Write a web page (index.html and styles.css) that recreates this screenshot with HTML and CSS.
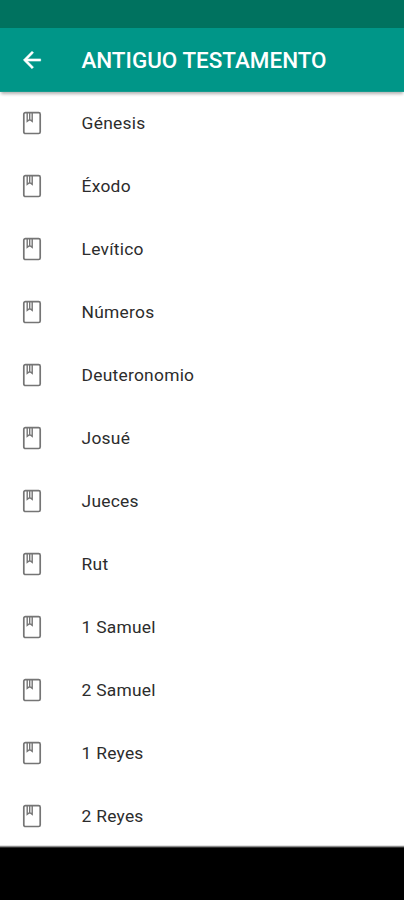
FILE: index.html
```html
<!DOCTYPE html>
<html lang="es">
<head>
<meta charset="utf-8">
<title>Antiguo Testamento</title>
<link rel="stylesheet" href="styles.css">
</head>
<body>
<svg width="0" height="0" class="defs" aria-hidden="true">
  <symbol id="book" viewBox="0 0 20 24">
    <rect x="1.8" y="1.7" width="16.4" height="20.8" rx="1.6" fill="none" stroke="currentColor" stroke-width="1.7"/>
    <path d="M5.2 2v8.4l2.5-2 2.5 2V2M7.7 2v6.4" fill="none" stroke="currentColor" stroke-width="1.4"/>
  </symbol>
</svg>
<div class="status"></div>
<header class="bar">
  <svg class="back" viewBox="0 0 24 24"><path d="M20 11H7.83l5.59-5.59L12 4l-8 8 8 8 1.41-1.41L7.83 13H20z" fill="currentColor" stroke="currentColor" stroke-width=".5"/></svg>
  <h1>ANTIGUO TESTAMENTO</h1>
</header>
<ul class="list">
  <li><svg><use href="#book"/></svg><span>Génesis</span></li>
  <li><svg><use href="#book"/></svg><span>Éxodo</span></li>
  <li><svg><use href="#book"/></svg><span>Levítico</span></li>
  <li><svg><use href="#book"/></svg><span>Números</span></li>
  <li><svg><use href="#book"/></svg><span>Deuteronomio</span></li>
  <li><svg><use href="#book"/></svg><span>Josué</span></li>
  <li><svg><use href="#book"/></svg><span>Jueces</span></li>
  <li><svg><use href="#book"/></svg><span>Rut</span></li>
  <li><svg><use href="#book"/></svg><span>1 Samuel</span></li>
  <li><svg><use href="#book"/></svg><span>2 Samuel</span></li>
  <li><svg><use href="#book"/></svg><span>1 Reyes</span></li>
  <li><svg><use href="#book"/></svg><span>2 Reyes</span></li>
</ul>
<div class="nav"></div>
</body>
</html>
```
FILE: styles.css
```css
body {
  margin: 0;
  height: 900px;
  display: flex;
  flex-direction: column;
  overflow: hidden;
  background: #fff;
  font-family: Roboto, sans-serif;
}
.defs { display: none; }
.status { height: 28px; flex: none; background: #00725f; }
.bar {
  height: 63px;
  flex: none;
  display: flex;
  align-items: center;
  background: #009688;
  color: #fff;
  border-bottom: 1px solid #159b8e;
  box-shadow: 0 3px 3px -1px rgba(0, 0, 0, .3);
  z-index: 1;
}
.back { width: 26px; height: 26px; margin: 1px 0 0 19px; }
h1 {
  margin: 0 0 0 36.4px;
  font-size: 22.45px;
  font-weight: 500;
  white-space: nowrap;
}
.list { list-style: none; margin: 0; padding: 0; flex: 1; min-height: 0; overflow: hidden; }
.list li {
  height: 63px;
  display: flex;
  align-items: center;
  margin-top: -1px;
  margin-bottom: 1px;
}
.list svg { width: 20px; height: 24px; margin: 0 39.6px 0 22px; color: #757575; }
.list span { font-size: 17.4px; color: #2c2c2c; letter-spacing: .25px; }
.nav {
  height: 55px;
  flex: none;
  background: linear-gradient(#e2e2e2 0 1px, #8c8c8c 1px 2px, #303030 2px 3px, #000 3px);
}
```
